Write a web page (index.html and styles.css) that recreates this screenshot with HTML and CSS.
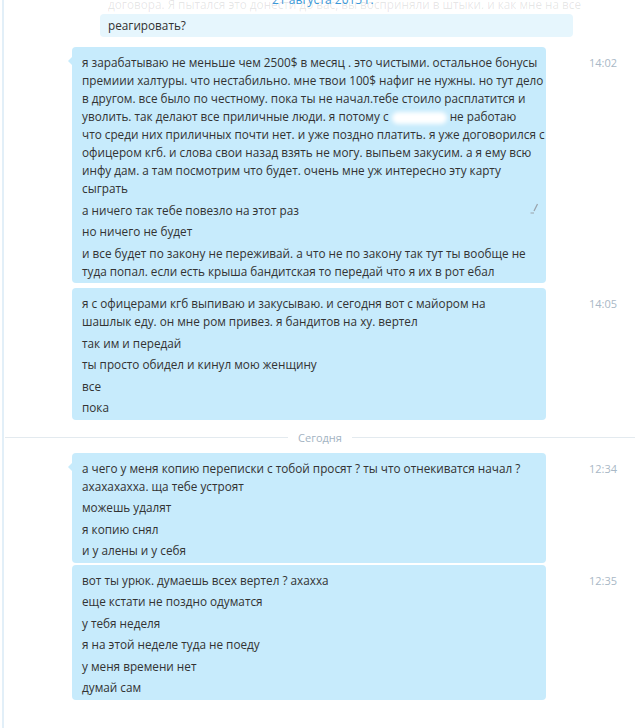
FILE: index.html
```html
<!DOCTYPE html>
<html lang="ru">
<head>
<meta charset="utf-8">
<link rel="stylesheet" href="styles.css">
</head>
<body>
<div class="chat">
  <div class="edge"></div>
  <div class="top">
    <div class="ghost">договора. Я пытался это донести до вас, вы восприняли в штыки. и как мне на все</div>
    <div class="date-top">21 августа 2015 г.</div>
    <div class="bubble pale">реагировать?</div>
  </div>

  <div class="row first">
    <div class="bubble tail">
      <p>я зарабатываю не меньше чем 2500$ в месяц . это чистыми. остальное бонусы<br>премиии халтуры. что нестабильно. мне твои 100$ нафиг не нужны. но тут дело<br>в другом. все было по честному. пока ты не начал.тебе стоило расплатится и<br>уволить. так делают все приличные люди. я потому с <span class="blot"></span> не работаю<br>что среди них приличных почти нет. и уже поздно платить. я уже договорился с<br>офицером кгб. и слова свои назад взять не могу. выпьем закусим. а я ему всю<br>инфу дам. а там посмотрим что будет. очень мне уж интересно эту карту<br>сыграть</p>
      <p class="edited">а ничего так тебе повезло на этот раз<svg class="pencil" width="9" height="11" viewBox="0 0 9 11"><path d="M7.5 1 L4 8" stroke="#9aa3aa" stroke-width="1.2" fill="none"/><path d="M0.5 10 H4" stroke="#9aa3aa" stroke-width="1" fill="none"/></svg></p>
      <p>но ничего не будет</p>
      <p>и все будет по закону не переживай. а что не по закону так тут ты вообще не<br>туда попал. если есть крыша бандитская то передай что я их в рот ебал</p>
    </div>
    <div class="time">14:02</div>
  </div>

  <div class="row">
    <div class="bubble">
      <p>я с офицерами кгб выпиваю и закусываю. и сегодня вот с майором на<br>шашлык еду. он мне ром привез. я бандитов на ху. вертел</p>
      <p>так им и передай</p>
      <p>ты просто обидел и кинул мою женщину</p>
      <p>все</p>
      <p>пока</p>
    </div>
    <div class="time">14:05</div>
  </div>

  <div class="sep"><span>Сегодня</span></div>

  <div class="row">
    <div class="bubble tail">
      <p>а чего у меня копию переписки с тобой просят ? ты что отнекиватся начал ?<br>ахахахахха. ща тебе устроят</p>
      <p>можешь удалят</p>
      <p>я копию снял</p>
      <p>и у алены и у себя</p>
    </div>
    <div class="time">12:34</div>
  </div>

  <div class="row close">
    <div class="bubble">
      <p>вот ты урюк. думаешь всех вертел ? ахахха</p>
      <p>еще кстати не поздно одуматся</p>
      <p>у тебя неделя</p>
      <p>я на этой неделе туда не поеду</p>
      <p>у меня времени нет</p>
      <p>думай сам</p>
    </div>
    <div class="time">12:35</div>
  </div>
</div>
</body>
</html>
```

FILE: styles.css
```css
html, body {
  margin: 0;
  padding: 0;
  background: #ffffff;
}
body {
  font-family: "Open Sans", "Noto Sans", sans-serif;
  font-size: 11.75px;
  color: #333333;
}
.chat {
  position: relative;
  width: 640px;
  height: 728px;
  overflow: hidden;
}
.edge {
  position: absolute;
  left: 2px;
  top: 0;
  bottom: 0;
  width: 2px;
  background: #e2eff8;
}
.top {
  position: relative;
  height: 47px;
}
.ghost {
  position: absolute;
  left: 108px;
  top: -4px;
  line-height: 17px;
  color: rgba(60, 60, 60, 0.13);
  white-space: nowrap;
}
.date-top {
  position: absolute;
  left: 272px;
  top: -9px;
  line-height: 17px;
  color: #3b98d8;
  font-size: 12px;
}
.bubble {
  background: #c7ebfc;
  border-radius: 4px;
  padding: 6px 10px 0;
  box-sizing: border-box;
  width: 474px;
  position: relative;
}
.bubble p {
  margin: 0 0 3.5px;
  line-height: 18px;
  white-space: nowrap;
}
.bubble.pale {
  position: absolute;
  left: 100px;
  top: 14px;
  width: 473px;
  height: 23px;
  padding: 3px 8px 0;
  line-height: 17px;
  background: #e6f6fd;
}
.tail::before {
  content: "";
  position: absolute;
  left: -4px;
  top: 10px;
  border-style: solid;
  border-width: 4px 4px 4px 0;
  border-color: transparent #c7ebfc transparent transparent;
}
.row {
  display: flex;
  align-items: flex-start;
  padding-left: 72px;
  margin-top: 5px;
}
.row.first {
  margin-top: 0;
}
.row.close {
  margin-top: 2px;
}
.time {
  margin-left: 43px;
  margin-top: 8px;
  font-size: 11px;
  line-height: 15px;
  color: #a9b8c6;
}
.edited {
  position: relative;
}
.pencil {
  position: absolute;
  right: -3px;
  top: 2px;
}
.blot {
  display: inline-block;
  width: 55px;
  height: 12px;
  vertical-align: middle;
  background: #ffffff;
  border-radius: 6px;
  filter: blur(2px);
}
.sep {
  display: flex;
  align-items: center;
  gap: 10px;
  margin: 10px 5px 8px 5px;
  color: #a3b3c2;
  font-size: 11px;
  line-height: 15px;
}
.sep::before,
.sep::after {
  content: "";
  flex: 1;
  height: 1px;
  background: #e3eaef;
}
```
